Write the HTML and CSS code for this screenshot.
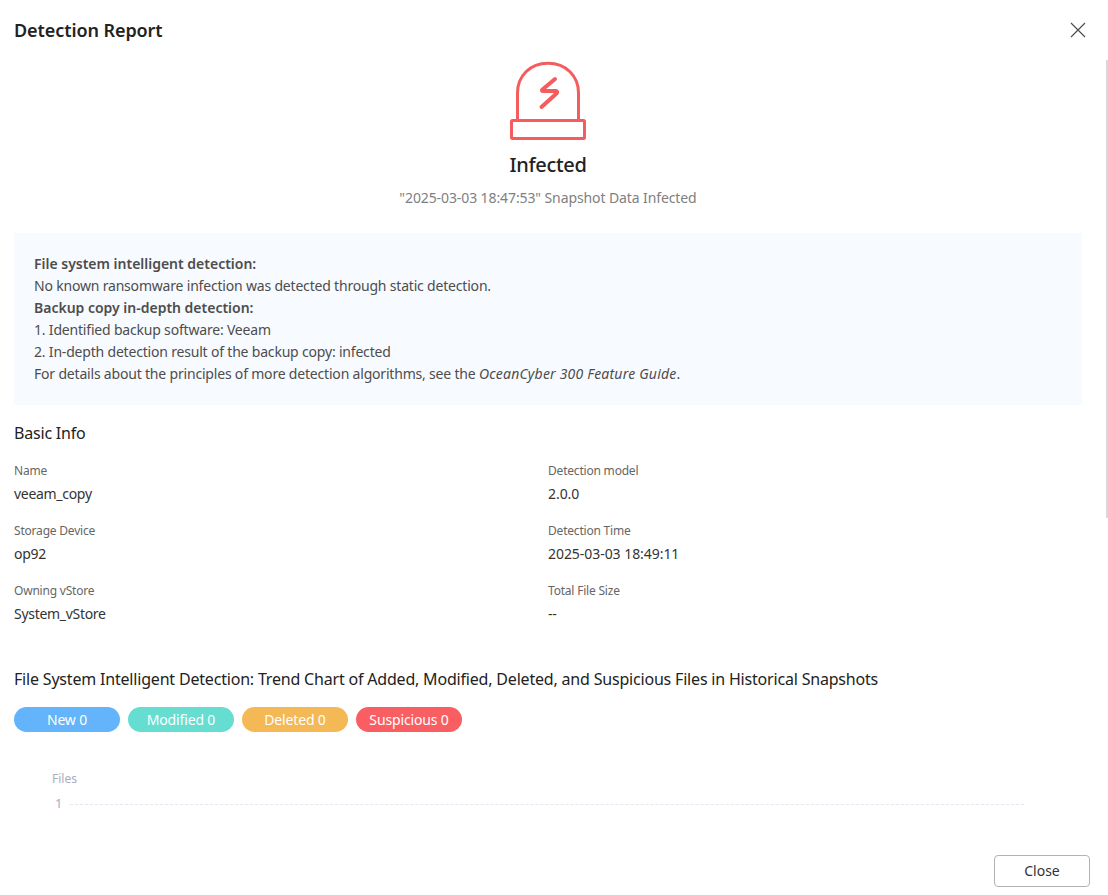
FILE: index.html
```html
<!DOCTYPE html>
<html lang="en">
<head>
<meta charset="utf-8">
<title>Detection Report</title>
<link rel="stylesheet" href="styles.css">
</head>
<body>
<div class="dialog">
  <header class="header">
    <h1 class="title">Detection Report</h1>
    <svg class="close-icon" width="16" height="16" viewBox="0 0 16 16"><path d="M1 1L15 15M15 1L1 15" stroke="#4d4d4d" stroke-width="1.2" fill="none"/></svg>
  </header>
  <div class="body">
    <main class="content">
      <section class="status">
        <svg class="alarm" width="78" height="82" viewBox="0 0 78 82" fill="none" stroke="#f45c5e" stroke-width="3">
          <path d="M8.5 60V33C8.500 16 21 3.200 39 3.200S69.500 16 69.500 33V60"/>
          <rect x="2.500" y="60.500" width="73" height="18" rx="1"/>
          <path d="M46 19L33.500 29.500Q32 31 34.500 31H47Q49 31.500 47.500 33.500L32.500 47" stroke-width="4" stroke-linecap="round" stroke-linejoin="round"/>
        </svg>
        <div class="status-name">Infected</div>
        <div class="status-desc">"2025-03-03 18:47:53" Snapshot Data Infected</div>
      </section>
      <section class="notice">
        <b>File system intelligent detection:</b><br>
        No known ransomware infection was detected through static detection.<br>
        <b>Backup copy in-depth detection:</b><br>
        1. Identified backup software: Veeam<br>
        2. In-depth detection result of the backup copy: infected<br>
        For details about the principles of more detection algorithms, see the <i>OceanCyber 300 Feature Guide</i>.
      </section>
      <h2 class="section-title">Basic Info</h2>
      <dl class="info">
        <div class="info-item"><dt>Name</dt><dd>veeam_copy</dd></div>
        <div class="info-item"><dt>Detection model</dt><dd class="num">2.0.0</dd></div>
        <div class="info-item"><dt>Storage Device</dt><dd>op92</dd></div>
        <div class="info-item"><dt>Detection Time</dt><dd class="num">2025-03-03 18:49:11</dd></div>
        <div class="info-item"><dt>Owning vStore</dt><dd>System_vStore</dd></div>
        <div class="info-item"><dt>Total File Size</dt><dd>--</dd></div>
      </dl>
      <h2 class="section-title chart-title">File System Intelligent Detection: Trend Chart of Added, Modified, Deleted, and Suspicious Files in Historical Snapshots</h2>
      <div class="pills">
        <span class="pill pill-new">New 0</span>
        <span class="pill pill-modified">Modified 0</span>
        <span class="pill pill-deleted">Deleted 0</span>
        <span class="pill pill-suspicious">Suspicious 0</span>
      </div>
      <div class="chart">
        <div class="axis-name">Files</div>
        <div class="axis-row"><span class="tick">1</span><span class="grid-line"></span></div>
      </div>
    </main>
    <div class="scroll-thumb"></div>
  </div>
  <footer class="footer">
    <button class="close-btn" type="button">Close</button>
  </footer>
</div>
</body>
</html>
```
FILE: styles.css
```css
* { box-sizing: border-box; }
html, body { margin: 0; height: 100%; overflow: hidden; background: #fff; }
body { font-family: "Noto Sans", "Open Sans", sans-serif; font-size: 14px; color: #4d4d4d; }
.dialog { display: flex; flex-direction: column; height: 895px; width: 1108px; }
.header { flex: none; height: 60px; display: flex; justify-content: space-between; align-items: flex-start; padding: 18px 22px 0 14px; }
.title { margin: 0; font-size: 18px; line-height: 24px; font-weight: 600; color: #222; letter-spacing: -0.08px; }
.close-icon { margin-top: 4px; }
.body { flex: none; height: 775px; position: relative; overflow: hidden; }
.content { width: 1068px; margin-left: 14px; }
.status { display: flex; flex-direction: column; align-items: center; }
.alarm { display: block; }
.status-name { margin-top: 9px; font-size: 20px; line-height: 28px; font-weight: 500; color: #222; letter-spacing: -0.3px; }
.status-desc { margin-top: 9px; line-height: 20px; color: #808080; letter-spacing: -0.1px; }
.notice { margin-top: 25px; height: 172px; padding: 20px 20px; background: #f7faff; line-height: 22px; color: #4d4d4d; letter-spacing: -0.19px; }
.notice b { font-weight: 600; letter-spacing: -0.01px; }
.notice i { letter-spacing: 0.2px; }
.section-title { margin: 17px 0 0; font-size: 16px; line-height: 22px; font-weight: 400; color: #222; letter-spacing: -0.19px; }
.info { margin: 18px 0 0; display: grid; grid-template-columns: 534px 1fr; row-gap: 16px; }
.info-item { height: 44px; }
.info dt { font-size: 12px; line-height: 18px; color: #666; letter-spacing: -0.2px; }
.info dd { margin: 3px 0 0; line-height: 22px; color: #333; letter-spacing: -0.3px; }
.info dd.num { letter-spacing: -0.05px; }
.chart-title { margin-top: 42px; }
.pills { margin-top: 17px; display: flex; gap: 8px; }
.pill { width: 106px; height: 25px; border-radius: 13px; color: #fff; line-height: 25px; text-align: center; letter-spacing: -0.15px; }
.pill-new { background: #63b4fa; }
.pill-modified { background: #66ddd1; }
.pill-deleted { background: #f4b854; }
.pill-suspicious { background: #f95e62; }
.chart { margin-top: 39px; padding-left: 38px; color: #a9adbd; font-size: 12px; }
.axis-name { line-height: 16px; }
.axis-row { display: flex; align-items: center; margin-top: 8px; height: 16px; }
.tick { width: 18px; padding-left: 3px; line-height: 14px; font-size: 13px; margin-top: -1px; }
.grid-line { width: 954px; border-top: 1px dashed #e4e7f2; margin-top: 3px; }
.scroll-thumb { position: absolute; right: 0; top: 0; width: 2px; height: 458px; background: #d9d9d9; }
.footer { flex: none; height: 60px; display: flex; justify-content: flex-end; padding: 20px 18px 0 0; }
.close-btn { width: 96px; height: 32px; border: 1px solid #b3b3b3; border-radius: 4px; background: #fff; color: #333; font: inherit; line-height: 20px; padding: 0; }
```
